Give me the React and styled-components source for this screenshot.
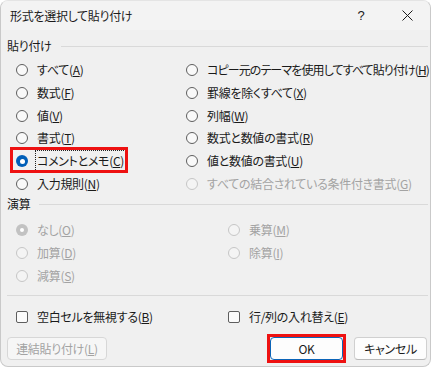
import React from 'react';
import styled, { createGlobalStyle, css } from 'styled-components';

const GlobalStyle = createGlobalStyle`
  html, body {
    margin: 0;
    padding: 0;
    background: #ffffff;
  }
  body {
    font-family: "Noto Sans CJK JP", "Noto Sans", sans-serif;
    font-feature-settings: "palt";
    font-size: 12px;
    letter-spacing: -0.3px;
    color: #1a1a1a;
  }
`;

const Dialog = styled.div`
  box-sizing: border-box;
  width: 431px;
  height: 367px;
  background: #f0f0f0;
  border: 1px solid #c9c9c9;
  border-top-color: #e4e4e4;
  border-radius: 8px;
  overflow: hidden;
  display: flex;
  flex-direction: column;
`;

const TitleBar = styled.div`
  height: 29px;
  flex-shrink: 0;
  background: #f3f3f3;
  display: flex;
  align-items: center;
  padding-left: 9px;
`;

const TitleText = styled.div`
  flex: 1;
  font-size: 12px;
  line-height: 16px;
  color: #1b1b1b;
`;

const TitleButton = styled.div`
  width: 46px;
  height: 29px;
  display: flex;
  align-items: center;
  justify-content: center;
  font-family: "Liberation Sans", sans-serif;
  font-size: 13px;
  color: #1b1b1b;
`;

const Body = styled.div`
  flex: 1;
  display: flex;
  flex-direction: column;
  padding: 0 2px 0 6px;
`;

const SectionHeader = styled.div`
  height: 18px;
  margin-top: ${p => p.$top}px;
  display: flex;
  align-items: center;
  gap: 9px;
  line-height: 16px;
  &::after {
    content: '';
    flex: 1;
    height: 1px;
    background: #d9d9d9;
  }
`;

const OptionGrid = styled.div`
  display: grid;
  grid-template-columns: ${p => p.$col}px 1fr;
  grid-auto-rows: 22.7px;
  padding-left: 9px;
  margin-top: ${p => p.$top}px;
`;

const Option = styled.div`
  position: relative;
  display: inline-flex;
  align-items: center;
  justify-self: start;
  gap: 8px;
  white-space: nowrap;
  color: ${p => (p.$disabled ? '#a3a3a3' : '#1a1a1a')};
  letter-spacing: ${p => (p.$tight ? '-0.9px' : 'inherit')};
  ${p =>
    p.$highlight &&
    css`
      &::after {
        content: '';
        position: absolute;
        left: -6px;
        right: -3px;
        top: -3px;
        bottom: -1px;
        border: 3px solid #ee1111;
        pointer-events: none;
      }
    `}
`;

const Label = styled.span`
  line-height: 16px;
  padding: 2px 1px;
  ${p =>
    p.$focus &&
    css`
      outline: 1px dotted #222;
    `}
  u {
    text-underline-offset: 1px;
  }
`;

const Radio = styled.span`
  box-sizing: border-box;
  width: 12px;
  height: 12px;
  border-radius: 50%;
  flex-shrink: 0;
  display: flex;
  align-items: center;
  justify-content: center;
  border: 1px solid ${p => (p.$disabled ? '#c6c6c6' : '#5e5e5e')};
  background: ${p => (p.$disabled ? '#f4f4f4' : '#f9f9f9')};
  ${p =>
    p.$checked &&
    css`
      border: none;
      background: ${p.$disabled ? '#c2c2c2' : '#005fb8'};
      &::after {
        content: '';
        width: ${p.$disabled ? 4 : 5}px;
        height: ${p.$disabled ? 4 : 5}px;
        border-radius: 50%;
        background: #ffffff;
      }
    `}
`;

const Separator = styled.div`
  height: 1px;
  background: #d9d9d9;
  margin-top: 8px;
`;

const CheckRow = styled.div`
  display: grid;
  grid-template-columns: 212px 1fr;
  height: 22px;
  padding-left: 9px;
  margin-top: 10px;
`;

const Checkbox = styled.span`
  box-sizing: border-box;
  width: 12px;
  height: 12px;
  border-radius: 2px;
  border: 1px solid #5e5e5e;
  background: #fbfbfb;
  flex-shrink: 0;
`;

const Footer = styled.div`
  display: flex;
  align-items: center;
  margin-top: 9px;
  padding-right: 1px;
`;

const Button = styled.div`
  position: relative;
  box-sizing: border-box;
  width: ${p => p.$width}px;
  height: 23px;
  margin-left: ${p => p.$gap || 0}px;
  border-radius: 4px;
  display: flex;
  align-items: center;
  justify-content: center;
  line-height: 16px;
  background: ${p => (p.$disabled ? '#f6f6f6' : '#fdfdfd')};
  border: 1px solid ${p => (p.$primary ? '#0b64b8' : p.$disabled ? '#d7d7d7' : '#d0d0d0')};
  border-bottom-color: ${p => (p.$primary ? '#0b64b8' : p.$disabled ? '#d7d7d7' : '#b8b8b8')};
  color: ${p => (p.$disabled ? '#a3a3a3' : '#1a1a1a')};
  u {
    text-underline-offset: 1px;
  }
  ${p =>
    p.$highlight &&
    css`
      &::after {
        content: '';
        position: absolute;
        inset: -4px;
        border: 3px solid #ee1111;
        pointer-events: none;
      }
    `}
`;

const Spacer = styled.div`
  flex: 1;
`;

const Key = ({ text, k }) => (
  <>
    {text}(<u>{k}</u>)
  </>
);

const pasteOptions = [
  { text: 'すべて', k: 'A' },
  { text: 'コピー元のテーマを使用してすべて貼り付け', k: 'H', tight: true },
  { text: '数式', k: 'F' },
  { text: '罫線を除くすべて', k: 'X' },
  { text: '値', k: 'V' },
  { text: '列幅', k: 'W' },
  { text: '書式', k: 'T' },
  { text: '数式と数値の書式', k: 'R' },
  { text: 'コメントとメモ', k: 'C', checked: true, highlight: true },
  { text: '値と数値の書式', k: 'U' },
  { text: '入力規則', k: 'N' },
  { text: 'すべての結合されている条件付き書式', k: 'G', disabled: true },
];

const calcOptions = [
  { text: 'なし', k: 'O', checked: true },
  { text: '乗算', k: 'M' },
  { text: '加算', k: 'D' },
  { text: '除算', k: 'I' },
  { text: '減算', k: 'S' },
];

function RadioOption({ opt, disabled }) {
  const off = disabled || opt.disabled;
  return (
    <Option $disabled={off} $highlight={opt.highlight} $tight={opt.tight}>
      <Radio $checked={opt.checked} $disabled={off} />
      <Label $focus={opt.highlight}>
        <Key text={opt.text} k={opt.k} />
      </Label>
    </Option>
  );
}

export default function App() {
  return (
    <>
      <GlobalStyle />
      <Dialog>
        <TitleBar>
          <TitleText>形式を選択して貼り付け</TitleText>
          <TitleButton>?</TitleButton>
          <TitleButton>
            <svg width="11" height="11" viewBox="0 0 11 11">
              <path d="M0.5 0.5 L10.5 10.5 M10.5 0.5 L0.5 10.5" stroke="#1b1b1b" strokeWidth="1" fill="none" />
            </svg>
          </TitleButton>
        </TitleBar>
        <Body>
          <SectionHeader $top={7}>貼り付け</SectionHeader>
          <OptionGrid $col={170} $top={4}>
            {pasteOptions.map(opt => (
              <RadioOption key={opt.k} opt={opt} />
            ))}
          </OptionGrid>
          <SectionHeader $top={0}>演算</SectionHeader>
          <OptionGrid $col={212} $top={6}>
            {calcOptions.map(opt => (
              <RadioOption key={opt.k} opt={opt} disabled />
            ))}
          </OptionGrid>
          <Separator />
          <CheckRow>
            <Option>
              <Checkbox />
              <Label>
                <Key text="空白セルを無視する" k="B" />
              </Label>
            </Option>
            <Option>
              <Checkbox />
              <Label>
                <Key text="行/列の入れ替え" k="E" />
              </Label>
            </Option>
          </CheckRow>
          <Footer>
            <Button $width={100} $disabled>
              <Key text="連結貼り付け" k="L" />
            </Button>
            <Spacer />
            <Button $width={73} $primary $highlight>
              OK
            </Button>
            <Button $width={73} $gap={11}>
              キャンセル
            </Button>
          </Footer>
        </Body>
      </Dialog>
    </>
  );
}
